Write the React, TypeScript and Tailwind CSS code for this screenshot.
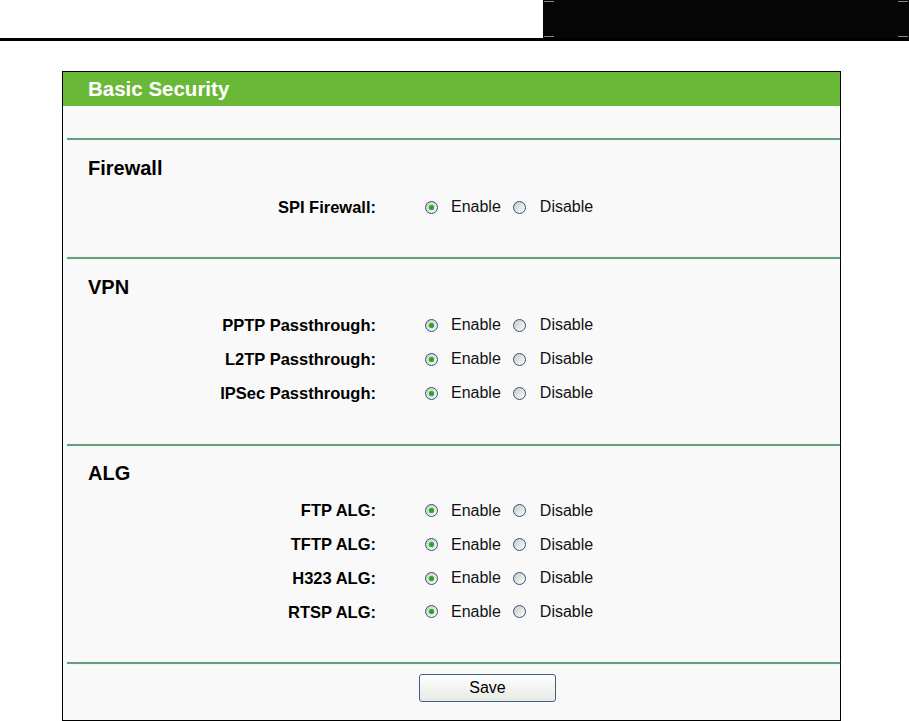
import React from "react";

type Section = {
  title: string;
  rows: string[];
  top: string;
  gap: string;
  bottom: string;
  rowH: string;
};

const sections: Section[] = [
  {
    title: "Firewall",
    rows: ["SPI Firewall:"],
    top: "pt-[14px]",
    gap: "mt-[8px]",
    bottom: "pb-[33px]",
    rowH: "h-[34px]",
  },
  {
    title: "VPN",
    rows: ["PPTP Passthrough:", "L2TP Passthrough:", "IPSec Passthrough:"],
    top: "pt-[14px]",
    gap: "mt-[7px]",
    bottom: "pb-[34px]",
    rowH: "h-[34px]",
  },
  {
    title: "ALG",
    rows: ["FTP ALG:", "TFTP ALG:", "H323 ALG:", "RTSP ALG:"],
    top: "pt-[13px]",
    gap: "mt-[7px]",
    bottom: "pb-[33px]",
    rowH: "h-[33.7px]",
  },
];

const Radio: React.FC<{ checked?: boolean }> = ({ checked }) => (
  <span className="w-[13px] h-[13px] rounded-full border border-[#30527a] bg-gradient-to-br from-[#c8c8c0] to-white flex items-center justify-center shrink-0">
    {checked && <span className="w-[5px] h-[5px] rounded-full bg-[#22a822] shadow-[0_0_1px_#6fd06f]" />}
  </span>
);

const Separator = () => (
  <div className="ml-[4px] h-[2px] bg-[#63a07b] shadow-[0_0_1px_#a9cdb7]" />
);

const Row: React.FC<{ label: string; h: string }> = ({ label, h }) => (
  <div className={`flex items-center ${h}`}>
    <div className="w-[313px] text-right font-bold text-[16.5px] text-black">{label}</div>
    <div className="ml-[49px] flex items-center text-[16px] text-[#111]">
      <Radio checked />
      <span className="ml-[13px]">Enable</span>
      <span className="ml-[12px]">
        <Radio />
      </span>
      <span className="ml-[14px]">Disable</span>
    </div>
  </div>
);

export default function App() {
  return (
    <div
      className="w-[909px] h-[721px] bg-white overflow-hidden"
      style={{ fontFamily: '"Liberation Sans", Arial, sans-serif' }}
    >
      {/* page header strip */}
      <div className="flex justify-end h-[38px]">
        <div className="relative w-[366px] h-[38px] bg-[#050505]">
          <span className="absolute left-[1px] top-[1px] w-[10px] h-[1px] bg-[#8a8a8a]" />
          <span className="absolute left-[1px] bottom-[1px] w-[10px] h-[1px] bg-[#8a8a8a]" />
          <span className="absolute right-[1px] top-[1px] w-[10px] h-[1px] bg-[#8a8a8a]" />
          <span className="absolute right-[1px] bottom-[1px] w-[10px] h-[1px] bg-[#8a8a8a]" />
        </div>
      </div>
      <div className="h-[3px] bg-black" />

      {/* panel */}
      <div className="ml-[62px] mt-[30px] w-[779px] border border-black bg-[#f9f9f9]">
        <div className="h-[34px] bg-[#6ab837] flex items-center pl-[25px]">
          <span className="text-white font-bold text-[20.5px]">Basic Security</span>
        </div>
        <div className="h-[32px]" />
        <Separator />

        {sections.map((s) => (
          <React.Fragment key={s.title}>
            <div className={`${s.top} ${s.bottom}`}>
              <div className="h-[28px] flex items-center pl-[25px] font-bold text-[20px] text-black">
                {s.title}
              </div>
              <div className={s.gap}>
                {s.rows.map((r) => (
                  <Row key={r} label={r} h={s.rowH} />
                ))}
              </div>
            </div>
            <Separator />
          </React.Fragment>
        ))}

        <div className="pt-[10px] h-[56px]">
          <button className="ml-[356px] w-[137px] h-[28px] rounded-[3px] border border-[#3f5f86] bg-gradient-to-b from-white to-[#e8e8e4] text-[16px] text-black">
            Save
          </button>
        </div>
      </div>
    </div>
  );
}
